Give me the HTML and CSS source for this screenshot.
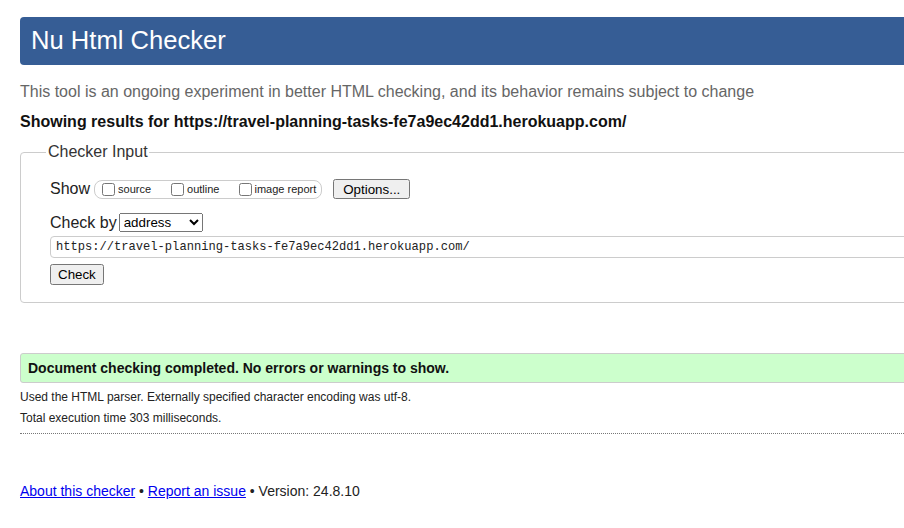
FILE: index.html
```html
<!DOCTYPE html>
<html lang="en">
<head>
<meta charset="utf-8">
<title>Showing results for https://travel-planning-tasks-fe7a9ec42dd1.herokuapp.com/ - Nu Html Checker</title>
<link rel="stylesheet" href="styles.css">
</head>
<body>
<div class="page">
  <h1 class="title">Nu Html Checker</h1>
  <p class="intro">This tool is an ongoing experiment in better HTML checking, and its behavior remains subject to change</p>
  <p class="showing">Showing results for https://travel-planning-tasks-fe7a9ec42dd1.herokuapp.com/</p>

  <fieldset class="checker">
    <legend class="checker-legend">Checker Input</legend>
    <div class="row show-row">
      <span class="row-label">Show</span>
      <span class="pill">
        <label class="opt"><input type="checkbox" class="cb">source</label>
        <label class="opt"><input type="checkbox" class="cb">outline</label>
        <label class="opt"><input type="checkbox" class="cb">image report</label>
      </span>
      <button type="button" class="btn btn-options">Options...</button>
    </div>
    <div class="row by-row">
      <span class="row-label">Check by</span>
      <select class="sel"><option>address</option><option>file upload</option><option>text input</option></select>
    </div>
    <input type="text" class="url" value="https://travel-planning-tasks-fe7a9ec42dd1.herokuapp.com/">
    <div class="submit-row"><button type="button" class="btn btn-check">Check</button></div>
  </fieldset>

  <div class="success">Document checking completed. No errors or warnings to show.</div>
  <div class="details">
    <p class="detail">Used the HTML parser. Externally specified character encoding was utf-8.</p>
    <p class="detail">Total execution time 303 milliseconds.</p>
  </div>

  <p class="footer"><a href="#" class="flink">About this checker</a> • <a href="#" class="flink">Report an issue</a> • Version: 24.8.10</p>
</div>
</body>
</html>
```
FILE: styles.css
```css
html, body {
  margin: 0;
  padding: 0;
  overflow: hidden;
  background: #fff;
}
body {
  font-family: "Liberation Sans", Arial, sans-serif;
  color: #222;
  padding: 17px 0 0 20px;
}
.page {
  width: 1180px;
}
.title {
  margin: 0;
  height: 48px;
  box-sizing: border-box;
  background: #365d95;
  color: #fff;
  font-weight: normal;
  font-size: 25.6px;
  line-height: 46px;
  padding: 0 0 2px 11px;
  border-radius: 4px;
}
.intro {
  margin: 18px 0 0;
  font-size: 16px;
  line-height: 18px;
  color: #666;
}
.showing {
  margin: 12px 0 0;
  font-size: 16px;
  line-height: 18px;
  font-weight: bold;
  color: #111;
}
.checker {
  margin: 12px 0 0;
  padding: 0 28px 17px 29px;
  border: 1px solid #ccc;
  border-radius: 4px;
  min-width: 0;
}
.checker-legend {
  margin-left: -4px;
  padding: 0 1px 0 2px;
  font-size: 16px;
  line-height: 18px;
  color: #333;
}
.row {
  display: flex;
  align-items: center;
  font-size: 16px;
}
.row-label {
  line-height: 18px;
  color: #222;
}
.show-row {
  margin-top: 18px;
  height: 20px;
}
.show-row .row-label {
  margin-right: 4px;
}
.pill {
  display: flex;
  align-items: center;
  height: 19px;
  box-sizing: border-box;
  border: 1px solid #ccc;
  border-radius: 8px;
  padding: 0 5px 0 3px;
  margin-right: 11px;
}
.opt {
  display: flex;
  align-items: center;
  font-size: 11px;
  color: #222;
  margin-right: 16px;
}
.opt:last-child {
  margin-right: 0;
}
.cb {
  width: 13px;
  height: 13px;
  margin: 0 3px 0 4px;
}
.opt:last-child .cb {
  margin-right: 2px;
}
.btn {
  font-family: "Liberation Sans", Arial, sans-serif;
  font-size: 13.33px;
  color: #000;
}
.btn-options {
  height: 20px;
  padding: 0 8px;
}
.by-row {
  margin-top: 14px;
}
.by-row .row-label {
  margin-right: 2px;
}
.sel {
  font-family: "Liberation Sans", Arial, sans-serif;
  font-size: 13.33px;
  height: 19px;
  width: 84px;
  color: #000;
}
.url {
  display: block;
  margin-top: 4px;
  width: 1100px;
  height: 22px;
  box-sizing: border-box;
  border: 1px solid #ccc;
  border-radius: 4px;
  padding: 0 5px;
  font-family: "Liberation Mono", "DejaVu Sans Mono", monospace;
  font-size: 12.1px;
  color: #222;
}
.submit-row {
  margin-top: 6px;
}
.btn-check {
  height: 21px;
}
.success {
  margin-top: 50px;
  background: #ccffcc;
  border: 1px solid #ccc;
  border-radius: 3px;
  padding: 6px 7px;
  font-size: 14px;
  line-height: 16px;
  font-weight: bold;
  color: #111;
}
.details {
  margin-top: 7px;
  padding-bottom: 8px;
  border-bottom: 1px dotted #777;
}
.detail {
  margin: 0;
  font-size: 12px;
  line-height: 14px;
  color: #222;
}
.detail + .detail {
  margin-top: 7px;
}
.footer {
  margin: 49px 0 0;
  font-size: 14px;
  line-height: 16px;
  color: #222;
}
.flink {
  color: #0000ee;
}
```
